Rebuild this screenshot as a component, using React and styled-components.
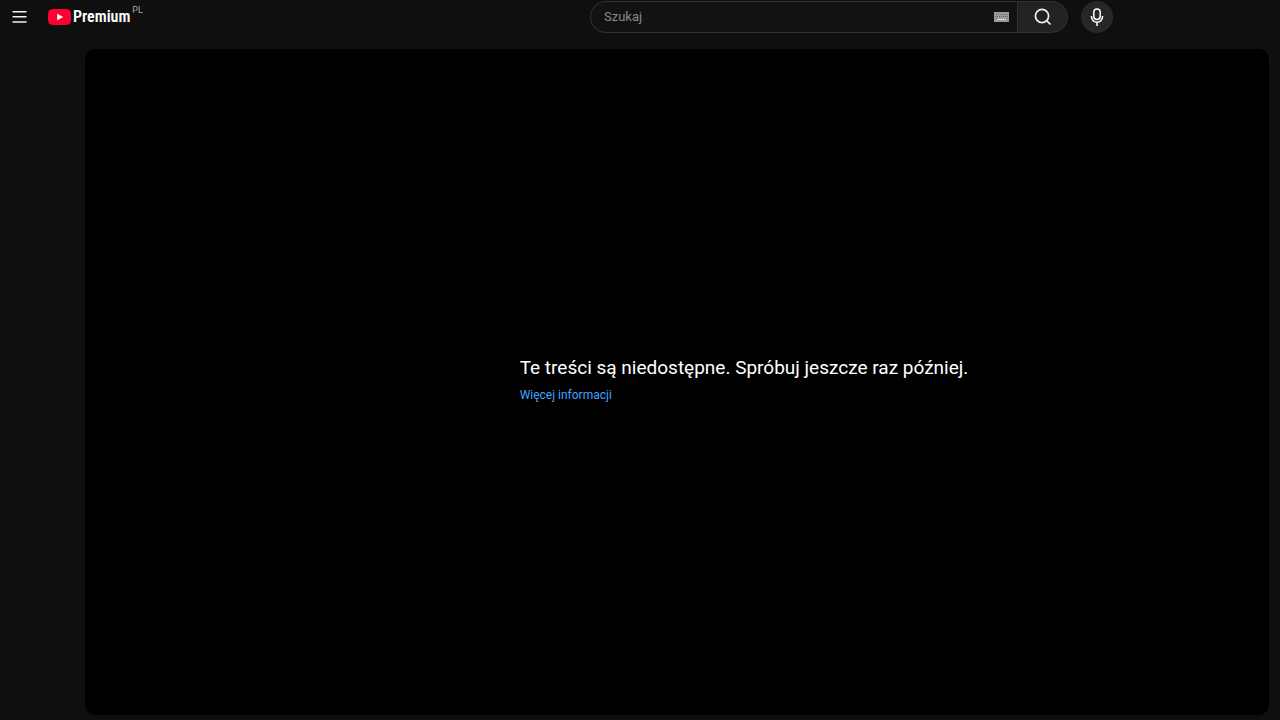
import styled, { createGlobalStyle } from 'styled-components';
import { useState } from 'react';

const App = () => {
  const [query, setQuery] = useState('');

  return (
    <Page>
      <GlobalStyle />
      <Header>
        <Start>
          <MenuButton type="button" aria-label="Menu">
            <MenuIcon />
          </MenuButton>
          <Logo href="#" aria-label="YouTube Premium">
            <LogoIcon />
            <LogoText>Premium</LogoText>
            <Country>PL</Country>
          </Logo>
        </Start>
        <Center>
          <SearchForm role="search" onSubmit={(e) => e.preventDefault()}>
            <SearchBox>
              <SearchInput
                type="text"
                aria-label="Szukaj"
                placeholder="Szukaj"
                value={query}
                onChange={(e) => setQuery(e.target.value)}
              />
              <KeyboardButton type="button" aria-label="Klawiatura">
                <KeyboardIcon />
              </KeyboardButton>
            </SearchBox>
            <SearchButton type="submit" aria-label="Wyszukaj">
              <SearchIcon />
            </SearchButton>
          </SearchForm>
          <MicButton type="button" aria-label="Wyszukaj głosowo">
            <MicIcon />
          </MicButton>
        </Center>
      </Header>
      <Main>
        <Player>
          <ErrorMessage>
            <Reason>Te treści są niedostępne. Spróbuj jeszcze raz później.</Reason>
            <MoreLink href="#">Więcej informacji</MoreLink>
          </ErrorMessage>
        </Player>
      </Main>
    </Page>
  );
};

const MenuIcon = () => (
  <svg width="15" height="12" viewBox="0 0 15 12" fill="#f1f1f1">
    <path d="M.5 0h14v1.5H.5zM.5 5.1h14v1.5H.5zM.5 10.2h14v1.5H.5z" />
  </svg>
);

const LogoIcon = () => (
  <svg width="23" height="16" viewBox="0 0 23 16">
    <path
      fill="#ff0033"
      d="M22.5 2.5A2.9 2.9 0 0 0 20.5.5C18.7 0 11.5 0 11.5 0S4.3 0 2.5.5A2.9 2.9 0 0 0 .5 2.5C0 4.3 0 8 0 8s0 3.7.5 5.5a2.9 2.9 0 0 0 2 2C4.3 16 11.5 16 11.5 16s7.2 0 9-.5a2.9 2.9 0 0 0 2-2C23 11.7 23 8 23 8s0-3.7-.5-5.5z"
    />
    <path fill="#fff" d="M9.2 4.7 15.2 8l-6 3.3z" />
  </svg>
);

const KeyboardIcon = () => (
  <svg width="15" height="10" viewBox="0 0 15 10">
    <path fill="#9b9b9b" d="M0 0h15v10H0z" />
    <path
      fill="#666"
      d="M2 2h1v1H2zM4 2h1v1H4zM6 2h1v1H6zM8 2h1v1H8zM10 2h1v1h-1zM12 2h1v1h-1zM1 4h1v1H1zM3 4h1v1H3zM5 4h1v1H5zM7 4h1v1H7zM9 4h1v1H9zM11 4h1v1h-1zM13 4h1v1h-1zM2 6h1v1H2zM12 6h1v1h-1z"
    />
    <path fill="#d6d6d6" d="M3 7h9v1H3z" />
  </svg>
);

const SearchIcon = () => (
  <svg width="18" height="18" viewBox="0 0 18 18" fill="none" stroke="#f1f1f1" strokeWidth="1.7">
    <circle cx="8" cy="8" r="6.6" />
    <path d="m12.6 12.6 3.9 3.9" />
  </svg>
);

const MicIcon = () => (
  <svg width="14" height="18" viewBox="0 0 14 18" fill="none" stroke="#fff" strokeWidth="1.5">
    <rect x="3.8" y="1" width="6.4" height="10.5" rx="3.2" />
    <path d="M1.5 8v.8a5.5 5.5 0 0 0 11 0V8M7 14.3V18" />
  </svg>
);

const GlobalStyle = createGlobalStyle`
  * {
    box-sizing: border-box;
  }
  body {
    margin: 0;
    background-color: #0f0f0f;
    color: #f1f1f1;
    font-family: Roboto, 'Liberation Sans', sans-serif;
  }
  button {
    padding: 0;
    border: none;
    background: none;
    cursor: pointer;
  }
  a {
    text-decoration: none;
  }
  svg {
    display: block;
    flex-shrink: 0;
  }
`;

const Page = styled.div`
  min-height: 100vh;
`;

const Header = styled.header`
  display: flex;
  justify-content: space-between;
  align-items: center;
  height: 33px;
  padding: 1px 167px 0 12px;
`;

const Start = styled.div`
  display: flex;
  align-items: center;
  gap: 21px;
`;

const MenuButton = styled.button`
  display: flex;
  align-items: center;
  height: 32px;
`;

const Logo = styled.a`
  display: flex;
  align-items: center;
  color: #ffffff;
`;

const LogoText = styled.span`
  margin-left: 2px;
  font-family: 'Roboto Condensed', 'Liberation Sans Narrow', Roboto, sans-serif;
  font-size: 16px;
  font-weight: 600;
  line-height: 22px;
`;

const Country = styled.span`
  align-self: flex-start;
  margin: -2px 0 0 2px;
  font-size: 9px;
  line-height: 12px;
  color: #aaaaaa;
`;

const Center = styled.div`
  display: flex;
  align-items: center;
  gap: 13px;
  width: 523px;
`;

const SearchForm = styled.form`
  display: flex;
  flex: 1;
  height: 32px;
`;

const SearchBox = styled.div`
  display: flex;
  flex: 1;
  align-items: center;
  padding: 0 8px 0 13px;
  border: 1px solid #303030;
  border-right: none;
  border-radius: 16px 0 0 16px;
  background-color: #121212;
`;

const SearchInput = styled.input`
  flex: 1;
  min-width: 0;
  padding: 0;
  border: none;
  outline: none;
  background: none;
  color: #f1f1f1;
  font-family: inherit;
  font-size: 13px;
  line-height: 20px;
  &::placeholder {
    color: #888888;
    opacity: 1;
  }
`;

const KeyboardButton = styled.button`
  display: flex;
`;

const SearchButton = styled.button`
  display: flex;
  align-items: center;
  justify-content: center;
  width: 51px;
  border: 1px solid #303030;
  border-radius: 0 16px 16px 0;
  background-color: #222222;
`;

const MicButton = styled.button`
  display: flex;
  align-items: center;
  justify-content: center;
  width: 32px;
  height: 32px;
  border-radius: 50%;
  background-color: #272727;
`;

const Main = styled.main`
  padding: 16px 11px 5px 85px;
`;

const Player = styled.section`
  display: flex;
  align-items: center;
  justify-content: center;
  aspect-ratio: 16 / 9;
  border-radius: 10px;
  background-color: #000000;
`;

const ErrorMessage = styled.div`
  display: flex;
  flex-direction: column;
  align-items: flex-start;
  gap: 6px;
  padding: 0 0 6px 134px;
`;

const Reason = styled.p`
  margin: 0;
  font-size: 19px;
  line-height: 26px;
  color: #ffffff;
`;

const MoreLink = styled.a`
  font-size: 12px;
  line-height: 16px;
  color: #3ea6ff;
`;

export default App;
